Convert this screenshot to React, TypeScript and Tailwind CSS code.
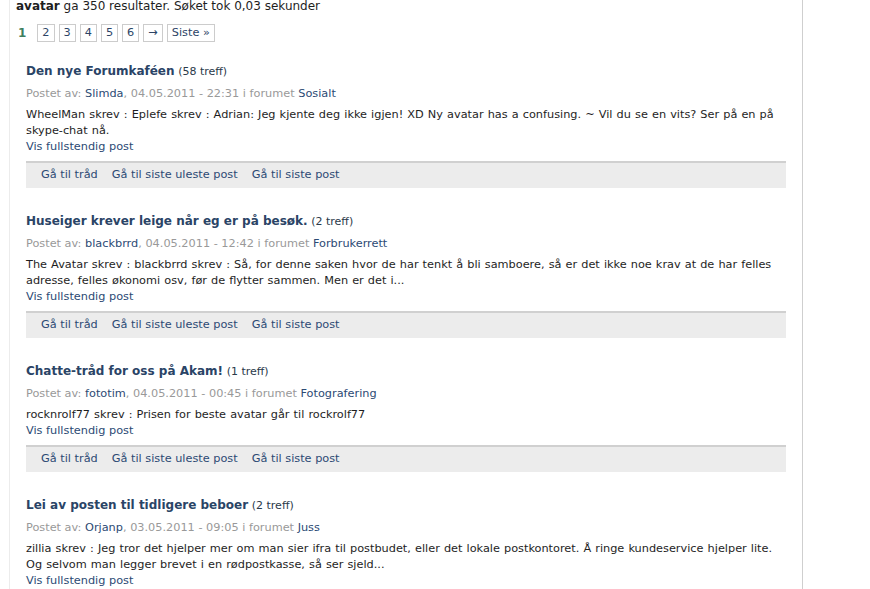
import React from "react";

type Post = {
  title: string;
  hits: string;
  author: string;
  date: string;
  forum: string;
  lines: string[];
};

const posts: Post[] = [
  {
    title: "Den nye Forumkaféen",
    hits: "(58 treff)",
    author: "Slimda",
    date: "04.05.2011 - 22:31",
    forum: "Sosialt",
    lines: [
      "WheelMan skrev : Eplefe skrev : Adrian: Jeg kjente deg ikke igjen! XD Ny avatar has a confusing. ~ Vil du se en vits? Ser på en på",
      "skype-chat nå.",
    ],
  },
  {
    title: "Huseiger krever leige når eg er på besøk.",
    hits: "(2 treff)",
    author: "blackbrrd",
    date: "04.05.2011 - 12:42",
    forum: "Forbrukerrett",
    lines: [
      "The Avatar skrev : blackbrrd skrev : Så, for denne saken hvor de har tenkt å bli samboere, så er det ikke noe krav at de har felles",
      "adresse, felles økonomi osv, før de flytter sammen. Men er det i...",
    ],
  },
  {
    title: "Chatte-tråd for oss på Akam!",
    hits: "(1 treff)",
    author: "fototim",
    date: "04.05.2011 - 00:45",
    forum: "Fotografering",
    lines: ["rocknrolf77 skrev : Prisen for beste avatar går til rockrolf77"],
  },
  {
    title: "Lei av posten til tidligere beboer",
    hits: "(2 treff)",
    author: "Orjanp",
    date: "03.05.2011 - 09:05",
    forum: "Juss",
    lines: [
      "zillia skrev : Jeg tror det hjelper mer om man sier ifra til postbudet, eller det lokale postkontoret. Å ringe kundeservice hjelper lite.",
      "Og selvom man legger brevet i en rødpostkasse, så ser sjeld...",
    ],
  },
];

const pages = ["2", "3", "4", "5", "6", "→", "Siste »"];

export default function App() {
  return (
    <div className="h-[589px] overflow-hidden bg-white font-['DejaVu_Sans',Verdana,sans-serif] text-[11.3px] text-[#1e1e1e]">
      <div className="ml-[9px] w-[794px] h-full border-l border-r border-l-[#ececec] border-r-[#cfcfcf] pl-[16px] pr-[16px]">
        {/* result summary */}
        <div className="-ml-[10px] leading-[13px] text-[12px]">
          <b>avatar</b> ga 350 resultater. Søket tok 0,03 sekunder
        </div>

        {/* pagination */}
        <div className="flex items-center gap-[4px] mt-[11px] -ml-[8px]">
          <span className="mr-[7px] font-bold text-[12px] text-[#3f7f5f]">1</span>
          {pages.map((p) => (
            <span
              key={p}
              className="h-[18px] min-w-[17px] px-[4px] border border-[#cccccc] flex items-center justify-center text-[11.3px] text-[#2c4466] leading-none"
            >
              {p}
            </span>
          ))}
        </div>

        {/* results */}
        <div className="mt-[21px] flex flex-col gap-[25px]">
          {posts.map((post) => (
            <div key={post.title} className="w-[760px]">
              <div className="h-[16px] leading-[16px] whitespace-nowrap">
                <span className="font-bold text-[12px] leading-[16px] text-[#2a4466]">{post.title}</span>{" "}
                <span className="text-[11px] leading-[16px] text-[#2a3a4a]">{post.hits}</span>
              </div>
              <div className="mt-[7px] leading-[16px] text-[#999999]">
                Postet av: <span className="text-[#2c4a74]">{post.author}</span>, {post.date} i forumet{" "}
                <span className="text-[#2c4a74]">{post.forum}</span>
              </div>
              <div className="mt-[5px] leading-[16px] [word-spacing:0.5px]">
                {post.lines.map((line) => (
                  <span key={line} className="block whitespace-nowrap">
                    {line}
                  </span>
                ))}
              </div>
              <div className="leading-[16px] text-[#2c4a74]">Vis fullstendig post</div>
              <div className="mt-[6px] h-[27px] bg-[#ececec] border-t-2 border-[#d0d0d0] flex items-center gap-[14px] pl-[15px] text-[#2c4a74]">
                <span>Gå til tråd</span>
                <span>Gå til siste uleste post</span>
                <span>Gå til siste post</span>
              </div>
            </div>
          ))}
        </div>
      </div>
    </div>
  );
}
